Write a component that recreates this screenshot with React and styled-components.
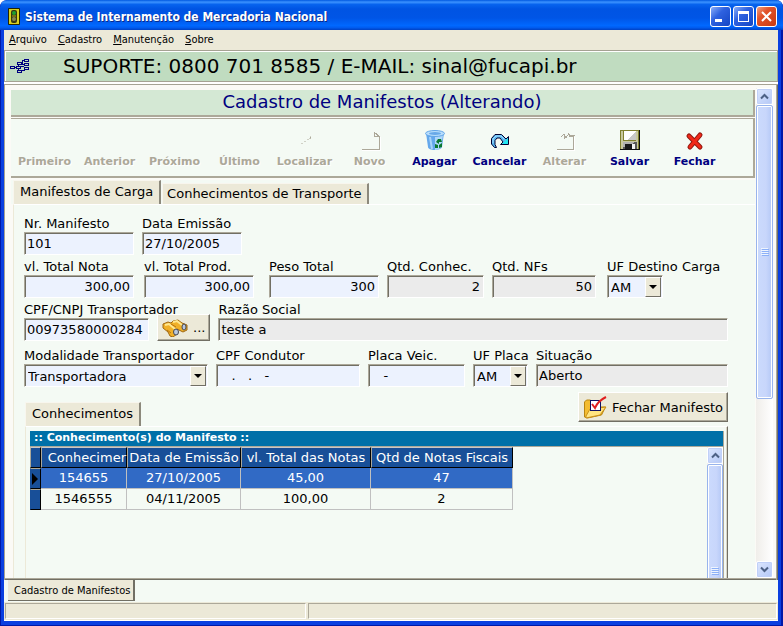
import { useState } from "react";
import styled, { createGlobalStyle } from "styled-components";

const GlobalStyle = createGlobalStyle`
    * {
        box-sizing: border-box;
    }

    body {
        margin: 0;
        background-color: #ffffff;
        color: #000000;
        font-family: Verdana, "DejaVu Sans", sans-serif;
        font-size: 13px;
    }

    button, input, select {
        font: inherit;
        color: inherit;
        margin: 0;
        padding: 0;
        border-radius: 0;
    }
`;

const Window = styled.div`
    display: flex;
    flex-direction: column;
    height: 100vh;
    padding: 0 5px 5px 4px;
    overflow: hidden;
    border-radius: 7px 7px 0 0;
    background-color: #0a3fe0;
    box-shadow: inset 1px -1px 0 #0019a8, inset -2px -1px 0 #0019a8;
`;

const TitleBar = styled.header`
    display: flex;
    flex: none;
    align-items: center;
    gap: 5px;
    height: 30px;
    margin: 0 -5px 0 -4px;
    padding: 3px 6px 0 8px;
    border-radius: 7px 7px 0 0;
    background: linear-gradient(#0058e0 0%, #3c93ff 7%, #0763ee 15%, #0054e3 30%, #0055e6 60%, #0068ff 85%, #005cf0 92%, #0041c4 100%);
`;

const Caption = styled.h1`
    flex: 1;
    margin: 0;
    color: #ffffff;
    font-family: "Trebuchet MS", "DejaVu Sans Condensed", sans-serif;
    font-size: 12px;
    font-weight: 700;
    text-shadow: 1px 1px 0 #0a2a8a;
    white-space: nowrap;
`;

const WindowButtons = styled.div`
    display: flex;
    gap: 2px;
`;

const WindowButton = styled.button`
    width: 21px;
    height: 21px;
    border: 1px solid #ffffff;
    border-radius: 3px;
    background: ${({ $close }) => $close
        ? "linear-gradient(135deg, #f0a080 0%, #e2532b 35%, #c73a10 100%)"
        : "linear-gradient(135deg, #8aaef8 0%, #2f62e0 40%, #1445c4 100%)"};

    svg {
        display: block;
    }
`;

const MenuBar = styled.nav`
    display: flex;
    flex: none;
    gap: 11px;
    height: 20px;
    padding: 2px 5px;
    background-color: #ece9d8;
    font-family: Tahoma, "DejaVu Sans Condensed", sans-serif;
    font-size: 11px;
    line-height: 15px;

    a {
        color: #000000;
        text-decoration: none;
    }
`;

const Support = styled.div`
    display: flex;
    flex: none;
    align-items: center;
    gap: 33px;
    height: 32px;
    padding-left: 5px;
    border: 1px solid #a5a293;
    box-shadow: inset 1px 1px 0 #ffffff;
    background-color: #c0dcc0;
    font-size: 20px;
    white-space: nowrap;
`;

const Body = styled.main`
    display: flex;
    flex: 1;
    min-height: 0;
    padding: 4px 5px 2px 3px;
    border-top: 2px solid #ffffff;
    background-color: #fbfaf6;
    box-shadow: inset 0 1px 0 #a5a293, inset 1px 0 0 #a5a293, inset -1px 0 0 #716f64, inset -2px 0 0 #aca899, inset 0 -1px 0 #716f64, inset 0 -2px 0 #aca899;
`;

const Page = styled.div`
    display: flex;
    flex: 1;
    flex-direction: column;
    min-width: 0;
    overflow: hidden;
    padding: 2px 0 0 4px;
`;

const Banner = styled.h2`
    flex: none;
    height: 27px;
    margin: 0;
    border-right: 2px solid #aca899;
    border-bottom: 2px solid #aca899;
    background-color: #d4e8d4;
    color: #000080;
    font-size: 18px;
    font-weight: 400;
    line-height: 24px;
    text-align: center;
    white-space: nowrap;
`;

const Toolbar = styled.div`
    display: flex;
    flex: none;
    height: 60px;
    margin-top: 1px;
    padding: 10px 0 0 1px;
    border-top: 1px solid #aca899;
    border-right: 2px solid #aca899;
    border-bottom: 2px solid #aca899;
    background-color: #f4faf4;
`;

const ToolButton = styled.button`
    display: flex;
    flex: none;
    flex-direction: column;
    align-items: center;
    gap: 2px;
    width: 65px;
    border: none;
    background: none;
    color: #000080;
    font-size: 11px;
    font-weight: 700;
    line-height: 14px;
    white-space: nowrap;

    &:disabled {
        color: #aca899;
        text-shadow: 1px 1px 0 #ffffff;
    }
`;

const IconSlot = styled.span`
    display: block;
    height: 24px;
`;

const Tabs = styled.div`
    display: flex;
    flex: none;
    align-items: flex-end;
    height: 24px;
    margin-top: 2px;
    padding-left: 2px;
    background-color: #f4faf4;
`;

const Tab = styled.button`
    height: ${({ $active }) => $active ? "24px" : "21px"};
    margin-right: 1px;
    padding: 0 6px 1px 6px;
    border: 1px solid #f8f6ee;
    border-right: 2px solid #8c897c;
    border-bottom: none;
    background-color: #ece9d8;
    line-height: 18px;
    white-space: nowrap;

    & + & {
        padding: 0 5px 0 4px;
    }
`;

const Sheet = styled.section`
    display: flex;
    flex: 1;
    flex-direction: column;
    min-height: 0;
    margin-left: 2px;
    padding: 11px 27px 0 10px;
    border-top: 1px solid #ffffff;
    border-left: 1px solid #ece9d8;
    background-color: #f4faf4;
`;

const Form = styled.form`
    display: flex;
    flex: none;
    flex-direction: column;
    gap: 4px;
`;

const Row = styled.div`
    display: flex;
    align-items: flex-end;
    gap: 8px;
    margin-bottom: ${({ $after = 0 }) => $after}px;
`;

const Field = styled.div`
    flex: ${({ $width }) => $width ? "none" : "1"};
    width: ${({ $width }) => $width ? `${$width}px` : "auto"};
    min-width: 0;
    margin-right: ${({ $after = 0 }) => $after}px;

    label {
        display: block;
        line-height: 16px;
        white-space: nowrap;
    }
`;

const Input = styled.input`
    display: block;
    width: 100%;
    height: 23px;
    padding: 0 3px 1px 2px;
    border: 1px solid;
    border-color: #aca899 #ffffff #ffffff #aca899;
    box-shadow: inset 1px 1px 0 #716f64;
    background-color: ${({ readOnly }) => readOnly ? "#ebebeb" : "#ecf2fe"};
    text-align: ${({ $right }) => $right ? "right" : "left"};
    white-space: pre;
    outline: none;
`;

const SelectBox = styled.div`
    display: grid;
    grid-template-columns: 1fr 16px;
    width: ${({ $width }) => $width ? `${$width}px` : "100%"};
    height: 23px;
    padding: 1px 1px 0 1px;
    border: 1px solid;
    border-color: #aca899 #ffffff #ffffff #aca899;
    box-shadow: inset 1px 1px 0 #716f64;
    background-color: #ecf2fe;

    select {
        grid-area: 1 / 1 / 2 / 3;
        padding-left: 2px;
        border: none;
        appearance: none;
        background: none;
        outline: none;
    }
`;

const Arrow = styled.span`
    display: flex;
    grid-area: 1 / 2 / 2 / 3;
    align-items: center;
    justify-content: center;
    border: 1px solid;
    border-color: #ffffff #716f64 #716f64 #ffffff;
    background-color: #ece9d8;
    pointer-events: none;
`;

const PushButton = styled.button`
    display: flex;
    flex: none;
    align-items: center;
    justify-content: center;
    gap: 5px;
    height: 27px;
    padding: 0 4px;
    border: 1px solid;
    border-color: #ffffff #716f64 #716f64 #ffffff;
    box-shadow: inset -1px -1px 0 #aca899;
    background-color: #ece9d8;
    white-space: nowrap;
`;

const FinishButton = styled(PushButton)`
    height: 30px;
    margin-bottom: 4px;
`;

const DetailHead = styled.div`
    display: flex;
    flex: none;
    align-items: flex-end;
    justify-content: space-between;
    height: 39px;
    margin-left: 1px;
`;

const Detail = styled.div`
    display: flex;
    flex: 1;
    flex-direction: column;
    min-height: 0;
    margin-left: 1px;
    padding: 4px 3px 0 4px;
    border-top: 1px solid #ffffff;
    border-left: 1px solid #ece9d8;
    border-right: 1px solid #716f64;
    box-shadow: inset -1px 0 0 #d8d4c4;
`;

const GridTitle = styled.h3`
    flex: none;
    height: 16px;
    margin: 0;
    padding-left: 4px;
    border-bottom: 1px solid #aca899;
    border-right: 1px solid #aca899;
    background-color: #0070a8;
    color: #ffffff;
    font-size: 11px;
    font-weight: 700;
    line-height: 14px;
`;

const GridBody = styled.div`
    display: flex;
    flex: 1;
    justify-content: space-between;
    min-height: 0;
    border-right: 1px solid #aca899;
`;

const Table = styled.table`
    flex: none;
    align-self: flex-start;
    width: 483px;
    table-layout: fixed;
    border-collapse: separate;
    border-spacing: 0;

    th, td {
        height: 21px;
        padding: 0;
        font-weight: 400;
        line-height: 18px;
        text-align: center;
        white-space: nowrap;
    }

    th {
        border: 1px solid;
        border-color: #c8c8c8 #000000 #000000 #aca899;
        background-color: #184f98;
        color: #ffffff;
    }

    thead th:nth-child(2) {
        text-align: right;
    }

    tbody th {
        border-color: #aca899 #000000 #000000 #184f98;
    }

    td {
        border-right: 1px solid #c0c0c0;
        border-bottom: 1px solid #c0c0c0;
    }

    svg {
        display: block;
    }
`;

const TableRow = styled.tr`
    background-color: ${({ $selected }) => $selected ? "#316ac5" : "transparent"};
    color: ${({ $selected }) => $selected ? "#ffffff" : "#000000"};
`;

const ScrollBar = styled.div`
    display: flex;
    flex: none;
    flex-direction: column;
    width: ${({ $wide }) => $wide ? "17px" : "16px"};
    margin-left: 1px;
    overflow: hidden;
    background: linear-gradient(90deg, #f0eeea, #ffffff);
`;

const ScrollButton = styled.button`
    display: flex;
    flex: none;
    align-items: center;
    justify-content: center;
    height: 17px;
    border: 1px solid #ffffff;
    border-radius: 2px;
    background: linear-gradient(135deg, #dce6fe, #b4c8f6);
    box-shadow: inset 0 0 0 1px #c0d0f8;
`;

const Thumb = styled.div`
    display: flex;
    flex: ${({ $size }) => `0 0 ${$size}`};
    align-items: center;
    justify-content: center;
    border: 1px solid #98b4ec;
    border-radius: 2px;
    box-shadow: inset 0 0 0 1px #ffffff;
    background: linear-gradient(90deg, #cbdafd, #c8d6fb 60%, #b4c8f6);
`;

const ScrollGap = styled.div`
    flex: 1;
`;

const WindowTabs = styled.div`
    display: flex;
    flex: none;
    height: 22px;
    padding: 0 0 1px 4px;
    background-color: #f4faf4;
`;

const WindowTab = styled.button`
    padding: 0 3px 0 6px;
    border: none;
    border-right: 2px solid #716f64;
    border-bottom: 1px solid #716f64;
    background-color: #ece9d8;
    font-family: Tahoma, "DejaVu Sans Condensed", sans-serif;
    font-size: 11px;
`;

const StatusBar = styled.footer`
    display: grid;
    flex: none;
    grid-template-columns: 301px 1fr;
    gap: 2px;
    height: 19px;
    padding: 1px;
    border-bottom: 1px solid #ffffff;
    background-color: #ece9d8;
`;

const StatusPanel = styled.div`
    border: 1px solid;
    border-color: #aca899 #ffffff #ffffff #aca899;
`;

const TrafficLight = () => (
    <svg width="12" height="17" viewBox="0 0 12 17" aria-hidden="true">
        <rect x="0" y="0" width="12" height="17" rx="1" fill="#252400" />
        <rect x="1" y="1" width="10" height="15" fill="#d8d020" />
        <rect x="3" y="2" width="6" height="13" rx="2" fill="#383810" />
        <circle cx="6" cy="5" r="2" fill="#20a030" />
        <circle cx="6" cy="11" r="2" fill="#888850" />
        <path d="M4 8h4" stroke="#b0a820" />
    </svg>
);

const TreeIcon = () => (
    <svg width="20" height="17" viewBox="0 0 20 17" fill="none" stroke="#000080" shapeRendering="crispEdges" aria-hidden="true">
        <path d="M5 9.500h2M11 5.500h1v-3h2M12 6.500h2M11 8.500h3M8.500 8v-1M8.500 11v2M11 12.500h3v-2" />
        <g fill="#c0dcc0">
            <rect x="14.5" y="1.5" width="4" height="2" />
            <rect x="14.5" y="5.5" width="4" height="2" />
            <rect x="14.5" y="9.5" width="4" height="2" />
            <rect x="7.5" y="4.5" width="4" height="2" />
            <rect x="6.5" y="8.5" width="4" height="2" />
            <rect x="0.5" y="8.500" width="4" height="2" />
            <rect x="7.500" y="12.500" width="4" height="2" />
        </g>
    </svg>
);

const SearchIcon = () => (
    <svg width="22" height="22" viewBox="0 0 22 22" aria-hidden="true">
        <path d="M7.500 14.500h1M10.500 12.500h1M13.500 10.500h1M15.500 9.500h1M16.500 7.500v2" stroke="#aca899" fill="none" />
    </svg>
);

const NewIcon = () => (
    <svg width="22" height="22" viewBox="0 0 22 22" fill="none" stroke="#aca899" shapeRendering="crispEdges" aria-hidden="true">
        <path d="M3 20.5h17.5V7.5h-5V3M15.5 3.5l5 4" />
        <path d="M3 21.5h18.5V8" stroke="#ffffff" />
    </svg>
);

const TrashIcon = () => (
    <svg width="22" height="22" viewBox="0 0 22 22" aria-hidden="true">
        <path d="M2 4l2 14c0 4 13 4 14 0l2-14z" fill="#64a8ec" />
        <path d="M11 6h8l-2 12c-1 2-4 3-6 3z" fill="#b0d8fa" />
        <path d="M6 8l2 12" stroke="#a8d4fa" strokeWidth="2" />
        <ellipse cx="11" cy="4.500" rx="9.500" ry="3" fill="#b8defc" stroke="#60a4e8" />
        <ellipse cx="11" cy="4.500" rx="6" ry="1.500" fill="#68a8e8" />
        <path d="M12 13l2-3h3l1 3h-3v2zM11 15l3 1v3h-3zM18 14v4l-3 1v-3z" fill="#087830" />
    </svg>
);

const UndoIcon = () => (
    <svg width="20" height="22" viewBox="0 0 20 22" aria-hidden="true">
        <path d="M6.500 18.500H4.500L1.500 15V9.500L5 5.500h6.500L16 10l2.500-2.500v8h-8L13 13l-3-4H7L5 11.500v4z" fill="#58b8f0" stroke="#000030" />
        <path d="M3 14v-4l3-3h5l3 3" fill="none" stroke="#a8dcff" />
        <path d="M18 9v6h-6z" fill="#20e8f0" />
    </svg>
);

const EditIcon = () => (
    <svg width="22" height="22" viewBox="0 0 22 22" fill="none" stroke="#aca899" shapeRendering="crispEdges" aria-hidden="true">
        <path d="M3 20.500h16.500V7.500h-4V5M15 6.500h6M7 7.500l3-2 2 3 3-4M10.500 5v5" />
        <path d="M3 21.500h17.500V8" stroke="#ffffff" />
    </svg>
);

const SaveIcon = () => (
    <svg width="22" height="22" viewBox="0 0 22 22" shapeRendering="crispEdges" aria-hidden="true">
        <rect x="1" y="1" width="20" height="20" fill="#101010" />
        <rect x="1" y="1" width="19" height="19" fill="#808030" />
        <rect x="2" y="2" width="17" height="18" fill="#c8c8a0" />
        <rect x="4" y="2" width="13" height="10" fill="#808030" />
        <rect x="5" y="2" width="12" height="9" fill="#ffffff" />
        <path d="M17 3v8H8z" fill="#c8c8c8" />
        <path d="M4 13h14v7H4z" fill="#585858" />
        <path d="M4 13h12l-7 5H4z" fill="#b0b0b0" />
        <rect x="6" y="15" width="10" height="5" fill="#181818" />
        <rect x="13" y="15" width="3" height="5" fill="#f4f4f4" />
    </svg>
);

const CloseIcon = () => (
    <svg width="20" height="22" viewBox="0 0 20 22" aria-hidden="true">
        <path d="M4 7l11 11M15 6L5 18" stroke="#901810" strokeWidth="5" strokeLinecap="round" />
        <path d="M4 7l11 11M15 6L5 18" stroke="#f02818" strokeWidth="3" strokeLinecap="round" />
    </svg>
);

const BinocularsIcon = () => (
    <svg width="26" height="18" viewBox="0 0 26 18" aria-hidden="true">
        <path d="M1 5l5-2 3 1 2-2 5-1 4 3 5 2v5l-4 2-6-3v5l-4 3-3-1-2-4-5-4z" fill="#f0b028" stroke="#a06810" />
        <path d="M3 6l4-1 7 6M11 3l4-1 5 4" fill="none" stroke="#ffe890" strokeWidth="2" />
        <path d="M9 5l5 3M5 11l4 3" stroke="#b87410" />
        <ellipse cx="14" cy="13" rx="2.500" ry="3" fill="#b8c8e0" stroke="#484850" />
        <ellipse cx="22" cy="8" rx="2" ry="3" fill="#b8c8e0" stroke="#484850" />
    </svg>
);

const FolderCheckIcon = () => (
    <svg width="24" height="24" viewBox="0 0 24 24" aria-hidden="true">
        <path d="M1.500 22V7l2-2h4l1 2h9v5h5l-4 8-14 3z" fill="#f4bc30" stroke="#b88410" />
        <path d="M3 21l4-7 16-2-6 8-14 3z" fill="#ffe480" stroke="#c89018" />
        <rect x="7.500" y="5.500" width="10" height="10" fill="#ffffff" stroke="#101060" />
        <path d="M9 9l3 4c2-5 5-8 11-11" fill="none" stroke="#e02020" strokeWidth="2" />
    </svg>
);

const Chevron = ({ up }) => (
    <svg width="9" height="7" viewBox="0 0 9 7" aria-hidden="true">
        <path d={up ? "M1 5.500l3.500-3.500 3.500 3.500" : "M1 1.500l3.500 3.500 3.500-3.500"} fill="none" stroke="#4d6185" strokeWidth="2" />
    </svg>
);

const Grip = () => (
    <svg width="8" height="8" viewBox="0 0 8 8" shapeRendering="crispEdges" aria-hidden="true">
        <path d="M0 .5h7M0 2.500h7M0 4.500h7M0 6.500h7" stroke="#eef4fe" />
        <path d="M1 1.500h7M1 3.500h7M1 5.500h7M1 7.500h7" stroke="#8cb0f8" />
    </svg>
);

const tools = [
    { label: "Primeiro" },
    { label: "Anterior" },
    { label: "Próximo" },
    { label: "Último" },
    { label: "Localizar", icon: SearchIcon },
    { label: "Novo", icon: NewIcon },
    { label: "Apagar", icon: TrashIcon, enabled: true },
    { label: "Cancelar", icon: UndoIcon, enabled: true },
    { label: "Alterar", icon: EditIcon },
    { label: "Salvar", icon: SaveIcon, enabled: true },
    { label: "Fechar", icon: CloseIcon, enabled: true },
];

const rows = [
    { id: "154655", date: "27/10/2005", total: "45,00", count: "47" },
    { id: "1546555", date: "04/11/2005", total: "100,00", count: "2" },
];

function TextField({ id, label, value, width, after, right, readOnly }) {
    return (
        <Field $width={width} $after={after}>
            <label htmlFor={id}>{label}</label>
            <Input id={id} defaultValue={value} $right={right} readOnly={readOnly} />
        </Field>
    );
}

function SelectField({ id, label, options, width, boxWidth }) {
    return (
        <Field $width={width}>
            <label htmlFor={id}>{label}</label>
            <SelectBox $width={boxWidth}>
                <select id={id}>
                    {options.map(option => <option key={option}>{option}</option>)}
                </select>
                <Arrow>
                    <svg width="8" height="4" viewBox="0 0 8 4" aria-hidden="true">
                        <path d="M0 0h8L4 4z" />
                    </svg>
                </Arrow>
            </SelectBox>
        </Field>
    );
}

function ManifestForm() {
    return (
        <Form onSubmit={event => event.preventDefault()}>
            <Row>
                <TextField id="numero" label="Nr. Manifesto" value="101" width={110} />
                <TextField id="emissao" label="Data Emissão" value="27/10/2005" width={100} />
            </Row>
            <Row>
                <TextField id="total-nota" label="vl. Total Nota" value="300,00" width={110} after={2} right />
                <TextField id="total-prod" label="vl. Total Prod." value="300,00" width={110} after={7} right />
                <TextField id="peso" label="Peso Total" value="300" width={110} right />
                <TextField id="qtd-conhec" label="Qtd. Conhec." value="2" width={97} right readOnly />
                <TextField id="qtd-nfs" label="Qtd. NFs" value="50" width={104} after={3} right readOnly />
                <SelectField id="uf-destino" label="UF Destino Carga" options={["AM"]} width={120} boxWidth={56} />
            </Row>
            <Row $after={3}>
                <TextField id="cpf-cnpj" label="CPF/CNPJ Transportador" value="00973580000284" width={125} />
                <PushButton type="button" aria-label="Procurar transportador">
                    <BinocularsIcon />
                    ...
                </PushButton>
                <TextField id="razao" label="Razão Social" value="teste a" readOnly />
            </Row>
            <Row>
                <SelectField id="modalidade" label="Modalidade Transportador" options={["Transportadora"]} width={184} />
                <TextField id="cpf-condutor" label="CPF Condutor" value="   .   .   -" width={144} />
                <TextField id="placa" label="Placa Veic." value="   -" width={97} />
                <SelectField id="uf-placa" label="UF Placa" options={["AM"]} width={55} />
                <TextField id="situacao" label="Situação" value="Aberto" readOnly />
            </Row>
        </Form>
    );
}

function Waybills() {
    const [selected, setSelected] = useState("154655");

    return (
        <Detail>
            <GridTitle>:: Conhecimento(s) do Manifesto ::</GridTitle>
            <GridBody>
                <Table>
                    <colgroup>
                        <col style={{ width: 11 }} />
                        <col style={{ width: 86 }} />
                        <col style={{ width: 114 }} />
                        <col style={{ width: 130 }} />
                        <col />
                    </colgroup>
                    <thead>
                        <tr>
                            <th aria-label="Atual" />
                            <th>Conhecimer</th>
                            <th>Data de Emissão</th>
                            <th>vl. Total das Notas</th>
                            <th>Qtd de Notas Fiscais</th>
                        </tr>
                    </thead>
                    <tbody>
                        {rows.map(row => (
                            <TableRow key={row.id} $selected={row.id === selected} onClick={() => setSelected(row.id)}>
                                <th>
                                    {row.id === selected && (
                                        <svg width="8" height="12" viewBox="0 0 8 12" aria-hidden="true">
                                            <path d="M1 0l6 6-6 6z" />
                                        </svg>
                                    )}
                                </th>
                                <td>{row.id}</td>
                                <td>{row.date}</td>
                                <td>{row.total}</td>
                                <td>{row.count}</td>
                            </TableRow>
                        ))}
                    </tbody>
                </Table>
                <ScrollBar>
                    <ScrollButton aria-label="Subir"><Chevron up /></ScrollButton>
                    <Thumb $size="213px"><Grip /></Thumb>
                </ScrollBar>
            </GridBody>
        </Detail>
    );
}

export default function App() {
    return (
        <>
            <GlobalStyle />
            <Window>
                <TitleBar>
                    <TrafficLight />
                    <Caption>Sistema de Internamento de Mercadoria Nacional</Caption>
                    <WindowButtons>
                        <WindowButton aria-label="Minimizar">
                            <svg width="19" height="19" viewBox="0 0 19 19"><path d="M4 12h7v3H4z" fill="#fff" /></svg>
                        </WindowButton>
                        <WindowButton aria-label="Maximizar">
                            <svg width="19" height="19" viewBox="0 0 19 19">
                                <path d="M4 4h11v11H4zM5 7v7h9V7z" fill="#fff" fillRule="evenodd" />
                            </svg>
                        </WindowButton>
                        <WindowButton $close aria-label="Fechar janela">
                            <svg width="19" height="19" viewBox="0 0 19 19"><path d="M5 5l9 9M14 5l-9 9" stroke="#fff" strokeWidth="2" /></svg>
                        </WindowButton>
                    </WindowButtons>
                </TitleBar>
                <MenuBar>
                    <a href="#arquivo"><u>A</u>rquivo</a>
                    <a href="#cadastro"><u>C</u>adastro</a>
                    <a href="#manutencao"><u>M</u>anutenção</a>
                    <a href="#sobre"><u>S</u>obre</a>
                </MenuBar>
                <Support>
                    <TreeIcon />
                    SUPORTE: 0800 701 8585 / E-MAIL: sinal@fucapi.br
                </Support>
                <Body>
                    <Page>
                        <Banner>Cadastro de Manifestos (Alterando)</Banner>
                        <Toolbar>
                            {tools.map(({ label, icon: Icon, enabled }) => (
                                <ToolButton key={label} disabled={!enabled}>
                                    <IconSlot>{Icon && <Icon />}</IconSlot>
                                    {label}
                                </ToolButton>
                            ))}
                        </Toolbar>
                        <Tabs role="tablist">
                            <Tab role="tab" aria-selected="true" $active>Manifestos de Carga</Tab>
                            <Tab role="tab" aria-selected="false">Conhecimentos de Transporte</Tab>
                        </Tabs>
                        <Sheet>
                            <ManifestForm />
                            <DetailHead>
                                <Tab role="tab" aria-selected="true" $active>Conhecimentos</Tab>
                                <FinishButton type="button">
                                    <FolderCheckIcon />
                                    Fechar Manifesto
                                </FinishButton>
                            </DetailHead>
                            <Waybills />
                        </Sheet>
                    </Page>
                    <ScrollBar $wide>
                        <ScrollButton aria-label="Rolar para cima"><Chevron up /></ScrollButton>
                        <Thumb $size="60%"><Grip /></Thumb>
                        <ScrollGap />
                        <ScrollButton aria-label="Rolar para baixo"><Chevron /></ScrollButton>
                    </ScrollBar>
                </Body>
                <WindowTabs>
                    <WindowTab>Cadastro de Manifestos</WindowTab>
                </WindowTabs>
                <StatusBar>
                    <StatusPanel />
                    <StatusPanel />
                </StatusBar>
            </Window>
        </>
    );
}
